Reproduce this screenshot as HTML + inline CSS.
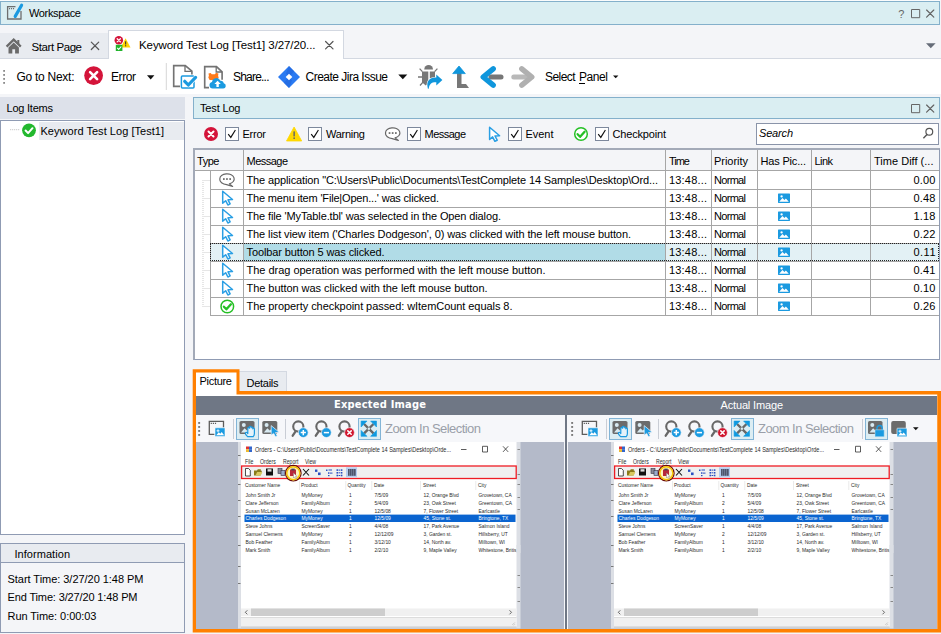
<!DOCTYPE html>
<html lang="en"><head><meta charset="utf-8"><title>Workspace - Keyword Test Log</title>
<style>
html,body{margin:0;padding:0;}
body{width:941px;height:634px;overflow:hidden;background:#f4f5f8;position:relative;font-family:"Liberation Sans",sans-serif;}
body>div,body>svg{position:absolute;box-sizing:content-box;}
.t{position:absolute;white-space:pre;line-height:16px;height:16px;}
</style></head>
<body>
<div style="left:0px;top:0px;width:940px;height:2px;background:#fbfcfd;"></div>
<div style="left:0px;top:1px;width:938px;height:22px;background:#daeef2;border:1px solid #84b0cb;"></div>
<span class="t" style="left:29.00px;top:4.79px;font-size:11px;letter-spacing:-0.354px;color:#000;">Workspace</span>
<span class="t" style="left:898.30px;top:5.79px;font-size:11px;letter-spacing:0.000px;color:#666;">?</span>
<div style="left:0px;top:33px;width:108px;height:25px;background:#e8ebf0;"></div>
<div style="left:0px;top:58px;width:941px;height:1px;background:#d3d8e1;"></div>
<div style="left:108px;top:30px;width:234px;height:29px;background:#fff;border:1px solid #d3d8e1;border-bottom:none;"></div>
<span class="t" style="left:31.50px;top:39.22px;font-size:11.5px;letter-spacing:-0.427px;color:#000;">Start Page</span>
<span class="t" style="left:139.00px;top:36.52px;font-size:11.5px;letter-spacing:-0.086px;color:#000;">Keyword Test Log [Test1] 3/27/20...</span>
<div style="left:0px;top:59px;width:941px;height:35px;background:#fff;"></div>
<span class="t" style="left:16.50px;top:69.04px;font-size:12px;letter-spacing:-0.270px;color:#000;">Go to Next:</span>
<span class="t" style="left:111.00px;top:69.04px;font-size:12px;letter-spacing:-0.418px;color:#000;">Error</span>
<span class="t" style="left:233.00px;top:69.04px;font-size:12px;letter-spacing:-0.790px;color:#000;">Share...</span>
<span class="t" style="left:305.50px;top:69.04px;font-size:12px;letter-spacing:-0.513px;color:#000;">Create Jira Issue</span>
<span class="t" style="left:545.00px;top:69.04px;font-size:12px;letter-spacing:-0.572px;color:#000;">Select</span>
<span class="t" style="left:579.00px;top:69.04px;font-size:12px;letter-spacing:-0.426px;color:#000;">Panel</span>
<div style="left:579px;top:82.5px;width:6.3px;height:1px;background:#000;"></div>
<div style="left:0px;top:97px;width:185px;height:21.6px;background:#dde1ea;"></div>
<span class="t" style="left:6.50px;top:99.99px;font-size:11px;letter-spacing:-0.227px;color:#000;">Log Items</span>
<div style="left:0px;top:120px;width:183px;height:413px;background:#fff;border:1px solid #8f9bb3;"></div>
<div style="left:39px;top:121.5px;width:145px;height:18px;background:#e8ebf0;"></div>
<span class="t" style="left:40.50px;top:122.69px;font-size:11px;letter-spacing:0.035px;color:#000;">Keyword Test Log [Test1]</span>
<div style="left:0px;top:543px;width:183px;height:88px;border:1px solid #8f9bb3;"></div>
<div style="left:1px;top:544px;width:183px;height:18px;background:#e8ebf0;border-bottom:1px solid #8f9bb3;"></div>
<span class="t" style="left:14.50px;top:546.19px;font-size:11px;letter-spacing:0.047px;color:#000;">Information</span>
<span class="t" style="left:7.50px;top:571.19px;font-size:11px;letter-spacing:-0.037px;color:#000;">Start Time: 3/27/20 1:48 PM</span>
<span class="t" style="left:7.50px;top:589.19px;font-size:11px;letter-spacing:-0.138px;color:#000;">End Time: 3/27/20 1:48 PM</span>
<span class="t" style="left:7.50px;top:608.49px;font-size:11px;letter-spacing:-0.056px;color:#000;">Run Time: 0:00:03</span>
<div style="left:193px;top:97px;width:745px;height:20px;background:#daeef2;border:1px solid #84b0cb;"></div>
<span class="t" style="left:200.00px;top:99.99px;font-size:11px;letter-spacing:-0.156px;color:#000;">Test Log</span>
<div style="left:225px;top:127px;width:12px;height:12px;background:#fff;border:1px solid #7d889c;"></div>
<div style="left:308px;top:127px;width:12px;height:12px;background:#fff;border:1px solid #7d889c;"></div>
<div style="left:407px;top:127px;width:12px;height:12px;background:#fff;border:1px solid #7d889c;"></div>
<div style="left:508px;top:127px;width:12px;height:12px;background:#fff;border:1px solid #7d889c;"></div>
<div style="left:595px;top:127px;width:12px;height:12px;background:#fff;border:1px solid #7d889c;"></div>
<span class="t" style="left:242.50px;top:125.99px;font-size:11px;letter-spacing:-0.238px;color:#000;">Error</span>
<span class="t" style="left:326.00px;top:125.99px;font-size:11px;letter-spacing:-0.260px;color:#000;">Warning</span>
<span class="t" style="left:424.50px;top:125.99px;font-size:11px;letter-spacing:-0.523px;color:#000;">Message</span>
<span class="t" style="left:525.50px;top:125.99px;font-size:11px;letter-spacing:-0.035px;color:#000;">Event</span>
<span class="t" style="left:612.50px;top:125.99px;font-size:11px;letter-spacing:-0.172px;color:#000;">Checkpoint</span>
<div style="left:756px;top:123px;width:181px;height:20px;background:#fff;border:1px solid #8a94a9;"></div>
<span class="t" style="left:759.00px;top:125.49px;font-size:11px;letter-spacing:-0.172px;color:#000;font-style:italic;">Search</span>
<div style="left:193px;top:148px;width:744px;height:208.6px;background:#fff;border:1px solid #8f9bb3;border-top:2px solid #a3aab8;border-left:2px solid #a3aab8;"></div>
<div style="left:195px;top:150px;width:744px;height:20.4px;background:#f4f5f8;border-bottom:1px solid #a6a6a6;"></div>
<div style="left:243px;top:150px;width:1px;height:166px;background:#a6a6a6;"></div>
<div style="left:665px;top:150px;width:1px;height:166px;background:#a6a6a6;"></div>
<div style="left:711px;top:150px;width:1px;height:166px;background:#a6a6a6;"></div>
<div style="left:757px;top:150px;width:1px;height:166px;background:#a6a6a6;"></div>
<div style="left:811px;top:150px;width:1px;height:166px;background:#a6a6a6;"></div>
<div style="left:870px;top:150px;width:1px;height:166px;background:#a6a6a6;"></div>
<div style="left:210px;top:171px;width:1px;height:145px;background:#a6a6a6;"></div>
<div style="left:210px;top:189px;width:729px;height:1px;background:#a6a6a6;"></div>
<div style="left:210px;top:207px;width:729px;height:1px;background:#a6a6a6;"></div>
<div style="left:210px;top:225px;width:729px;height:1px;background:#a6a6a6;"></div>
<div style="left:210px;top:243px;width:729px;height:1px;background:#a6a6a6;"></div>
<div style="left:210px;top:261px;width:729px;height:1px;background:#a6a6a6;"></div>
<div style="left:210px;top:279px;width:729px;height:1px;background:#a6a6a6;"></div>
<div style="left:210px;top:297px;width:729px;height:1px;background:#a6a6a6;"></div>
<div style="left:210px;top:315px;width:729px;height:1px;background:#a6a6a6;"></div>
<div style="left:244px;top:244px;width:421px;height:17px;background:#b1dce7;"></div>
<div style="left:211px;top:244px;width:32px;height:17px;background:#e3f1f5;"></div>
<div style="left:666px;top:244px;width:45px;height:17px;background:#e3f1f5;"></div>
<div style="left:712px;top:244px;width:45px;height:17px;background:#e3f1f5;"></div>
<div style="left:758px;top:244px;width:53px;height:17px;background:#e3f1f5;"></div>
<div style="left:812px;top:244px;width:58px;height:17px;background:#e3f1f5;"></div>
<div style="left:871px;top:244px;width:68px;height:17px;background:#e3f1f5;"></div>
<div style="left:210px;top:243px;width:729px;height:18px;border:1px dotted #222;box-sizing:border-box;"></div>
<span class="t" style="left:197.00px;top:152.99px;font-size:11px;letter-spacing:-0.453px;color:#000;">Type</span>
<span class="t" style="left:246.50px;top:152.99px;font-size:11px;letter-spacing:-0.523px;color:#000;">Message</span>
<span class="t" style="left:669.00px;top:152.99px;font-size:11px;letter-spacing:-1.016px;color:#000;">Time</span>
<span class="t" style="left:714.00px;top:152.99px;font-size:11px;letter-spacing:-0.033px;color:#000;">Priority</span>
<span class="t" style="left:760.50px;top:152.99px;font-size:11px;letter-spacing:-0.175px;color:#000;">Has Pic...</span>
<span class="t" style="left:814.50px;top:152.99px;font-size:11px;letter-spacing:-0.562px;color:#000;">Link</span>
<span class="t" style="left:874.00px;top:152.99px;font-size:11px;letter-spacing:0.017px;color:#000;">Time Diff (...</span>
<span class="t" style="left:246.50px;top:171.89px;font-size:11px;letter-spacing:-0.125px;color:#000;">The application "C:\Users\Public\Documents\TestComplete 14 Samples\Desktop\Ord...</span>
<span class="t" style="left:669.00px;top:171.89px;font-size:11px;letter-spacing:0.185px;color:#000;">13:48...</span>
<span class="t" style="left:714.00px;top:171.89px;font-size:11px;letter-spacing:-0.691px;color:#000;">Normal</span>
<span class="t" style="left:913.50px;top:171.89px;font-size:11px;letter-spacing:0.193px;color:#000;">0.00</span>
<span class="t" style="left:246.50px;top:189.89px;font-size:11px;letter-spacing:-0.179px;color:#000;">The menu item 'File|Open...' was clicked.</span>
<span class="t" style="left:669.00px;top:189.89px;font-size:11px;letter-spacing:0.185px;color:#000;">13:48...</span>
<span class="t" style="left:714.00px;top:189.89px;font-size:11px;letter-spacing:-0.691px;color:#000;">Normal</span>
<span class="t" style="left:913.50px;top:189.89px;font-size:11px;letter-spacing:0.193px;color:#000;">0.48</span>
<span class="t" style="left:246.50px;top:207.89px;font-size:11px;letter-spacing:-0.121px;color:#000;">The file 'MyTable.tbl' was selected in the Open dialog.</span>
<span class="t" style="left:669.00px;top:207.89px;font-size:11px;letter-spacing:0.185px;color:#000;">13:48...</span>
<span class="t" style="left:714.00px;top:207.89px;font-size:11px;letter-spacing:-0.691px;color:#000;">Normal</span>
<span class="t" style="left:913.50px;top:207.89px;font-size:11px;letter-spacing:0.193px;color:#000;">1.18</span>
<span class="t" style="left:246.50px;top:225.89px;font-size:11px;letter-spacing:-0.106px;color:#000;">The list view item ('Charles Dodgeson', 0) was clicked with the left mouse button.</span>
<span class="t" style="left:669.00px;top:225.89px;font-size:11px;letter-spacing:0.185px;color:#000;">13:48...</span>
<span class="t" style="left:714.00px;top:225.89px;font-size:11px;letter-spacing:-0.691px;color:#000;">Normal</span>
<span class="t" style="left:913.50px;top:225.89px;font-size:11px;letter-spacing:0.193px;color:#000;">0.22</span>
<span class="t" style="left:246.50px;top:243.89px;font-size:11px;letter-spacing:-0.116px;color:#000;">Toolbar button 5 was clicked.</span>
<span class="t" style="left:669.00px;top:243.89px;font-size:11px;letter-spacing:0.185px;color:#000;">13:48...</span>
<span class="t" style="left:714.00px;top:243.89px;font-size:11px;letter-spacing:-0.691px;color:#000;">Normal</span>
<span class="t" style="left:913.50px;top:243.89px;font-size:11px;letter-spacing:0.469px;color:#000;">0.11</span>
<span class="t" style="left:246.50px;top:261.89px;font-size:11px;letter-spacing:-0.021px;color:#000;">The drag operation was performed with the left mouse button.</span>
<span class="t" style="left:669.00px;top:261.89px;font-size:11px;letter-spacing:0.185px;color:#000;">13:48...</span>
<span class="t" style="left:714.00px;top:261.89px;font-size:11px;letter-spacing:-0.691px;color:#000;">Normal</span>
<span class="t" style="left:913.50px;top:261.89px;font-size:11px;letter-spacing:0.193px;color:#000;">0.41</span>
<span class="t" style="left:246.50px;top:279.89px;font-size:11px;letter-spacing:-0.048px;color:#000;">The button was clicked with the left mouse button.</span>
<span class="t" style="left:669.00px;top:279.89px;font-size:11px;letter-spacing:0.185px;color:#000;">13:48...</span>
<span class="t" style="left:714.00px;top:279.89px;font-size:11px;letter-spacing:-0.691px;color:#000;">Normal</span>
<span class="t" style="left:913.50px;top:279.89px;font-size:11px;letter-spacing:0.193px;color:#000;">0.10</span>
<span class="t" style="left:246.50px;top:297.89px;font-size:11px;letter-spacing:-0.060px;color:#000;">The property checkpoint passed: wItemCount equals 8.</span>
<span class="t" style="left:669.00px;top:297.89px;font-size:11px;letter-spacing:0.185px;color:#000;">13:48...</span>
<span class="t" style="left:714.00px;top:297.89px;font-size:11px;letter-spacing:-0.691px;color:#000;">Normal</span>
<span class="t" style="left:913.50px;top:297.89px;font-size:11px;letter-spacing:0.193px;color:#000;">0.26</span>
<div style="left:239px;top:371.3px;width:47px;height:20px;background:#e8ebf0;border:1px solid #d3d8e1;border-left:none;border-bottom:none;"></div>
<div style="left:195px;top:371px;width:42px;height:24px;background:#fff;"></div>
<div style="left:195px;top:393px;width:743px;height:237px;background:#fff;"></div>
<svg style="left:190px;top:366px" width="751" height="268" viewBox="190 366 751 268"><path fill-rule="evenodd" fill="#ff8000" d="M192.7 369.3H239.5V391.1H941V632.5H192.7ZM196 372.4V629H937.25V394.4H236.5V372.4Z"/></svg>
<span class="t" style="left:199.50px;top:372.99px;font-size:11px;letter-spacing:-0.292px;color:#000;">Picture</span>
<span class="t" style="left:246.50px;top:374.79px;font-size:11px;letter-spacing:-0.271px;color:#000;">Details</span>
<div style="left:196px;top:395.5px;width:741px;height:19px;background:#6f7785;"></div>
<span class="t" style="left:334.00px;top:396.79px;font-size:11px;letter-spacing:0.212px;color:#fff;font-family:'DejaVu Sans Condensed', 'DejaVu Sans', 'Liberation Sans', sans-serif;font-weight:bold;">Expected Image</span>
<span class="t" style="left:720.50px;top:397.39px;font-size:11px;letter-spacing:-0.155px;color:#fff;">Actual Image</span>
<div style="left:196px;top:414.5px;width:368.5px;height:27px;background:#f6f7fa;"></div>
<div style="left:567.5px;top:414.5px;width:369.5px;height:27px;background:#f6f7fa;"></div>
<div style="left:196px;top:441.5px;width:368px;height:187.5px;background:#b4bac9;"></div>
<div style="left:568px;top:441.5px;width:369px;height:187.5px;background:#b4bac9;"></div>
<div style="left:564px;top:414.5px;width:4px;height:214.5px;background:#f6f7fa;"></div>
<div style="left:565.2px;top:414.5px;width:1.6px;height:214.5px;background:#6f7785;"></div>
<span class="t" style="left:385.00px;top:420.80px;font-size:13px;letter-spacing:-0.549px;color:#9a9fa9;">Zoom In Selection</span>
<span class="t" style="left:758.00px;top:420.80px;font-size:13px;letter-spacing:-0.549px;color:#9a9fa9;">Zoom In Selection</span>
<div style="left:236.3px;top:418px;width:22.6px;height:21.7px;background:#dcedf3;border:1px solid #82b4d6;box-sizing:border-box;"></div>
<div style="left:358.2px;top:418px;width:22.6px;height:21.7px;background:#dcedf3;border:1px solid #82b4d6;box-sizing:border-box;"></div>
<div style="left:609.3px;top:418px;width:22.6px;height:21.7px;background:#dcedf3;border:1px solid #82b4d6;box-sizing:border-box;"></div>
<div style="left:731.2px;top:418px;width:22.6px;height:21.7px;background:#dcedf3;border:1px solid #82b4d6;box-sizing:border-box;"></div>
<div style="left:865.2px;top:418px;width:22.6px;height:21.7px;background:#dcedf3;border:1px solid #82b4d6;box-sizing:border-box;"></div>
<div style="left:232.5px;top:419px;width:1px;height:20px;background:#c9cdd5;"></div>
<div style="left:285px;top:419px;width:1px;height:20px;background:#c9cdd5;"></div>
<div style="left:605.5px;top:419px;width:1px;height:20px;background:#c9cdd5;"></div>
<div style="left:658px;top:419px;width:1px;height:20px;background:#c9cdd5;"></div>
<div style="left:861.5px;top:419px;width:1px;height:20px;background:#c9cdd5;"></div>
<svg style="left:0px;top:0px" width="941" height="59" viewBox="0 0 941 59">
<path d="M15.5 6.6H7.6V19h13.4V11" fill="none" stroke="#6e6e6e" stroke-width="1.3"/><path d="M9 8.6h1.1M11 8.6h1.1M13 8.6h1.1" stroke="#6e6e6e" stroke-width="1.1"/><path d="M15.2 16.4L21.6 5.2" stroke="#1b9ae0" stroke-width="3.2" stroke-linecap="round"/><path d="M14.3 17.9l.4-2.3 1.6 1z" fill="#1b9ae0"/>
<path d="M911.5 9.5h8.2v8.2h-8.2z" fill="none" stroke="#666" stroke-width="1"/><path d="M926.6 10.0L933.8000000000001 17.2M933.8000000000001 10.0L926.6 17.2" stroke="#606060" stroke-width="1.15" stroke-linecap="round" fill="none"/>
<path d="M6.6 46.6l7.1-6.9 7.1 6.9" fill="none" stroke="#6a6a6a" stroke-width="2.3" stroke-linejoin="miter"/><rect x="17.3" y="40" width="2" height="4" fill="#6a6a6a"/><path d="M8.5 47.6l5.2-5 5.2 5V53.4h-3.8v-4.1h-2.8v4.1H8.5z" fill="#6a6a6a"/>
<path d="M91.3 42.099999999999994L98.7 49.5M98.7 42.099999999999994L91.3 49.5" stroke="#555" stroke-width="1.2" stroke-linecap="round" fill="none"/><path d="M325.6 41.5L333.0 48.900000000000006M333.0 41.5L325.6 48.900000000000006" stroke="#555" stroke-width="1.2" stroke-linecap="round" fill="none"/>
<circle cx="118.8" cy="40.3" r="4.25" fill="#d4143a"/><path d="M117.2 38.699999999999996L120.39999999999999 41.9M120.39999999999999 38.699999999999996L117.2 41.9" stroke="#fff" stroke-width="1.3" stroke-linecap="round" fill="none"/><path d="M125.6 38.2l4.9 9.3h-9.8z" fill="#ffd400"/><rect x="125.1" y="41.3" width="1.1" height="3.2" fill="#333"/><rect x="125.1" y="45.2" width="1.1" height="1.1" fill="#333"/><rect x="115.8" y="44.8" width="6.6" height="6.2" fill="#21b32b"/><path d="M117.2 47.9l1.5 1.5 2.6-2.9" fill="none" stroke="#fff" stroke-width="1.1"/>
<path d="M926 43.3h9.6l-4.8 5z" fill="#666c78"/>
</svg>
<svg style="left:0px;top:59px" width="941" height="35" viewBox="0 59 941 35">
<rect x="3.2" y="70" width="1.8" height="1.8" fill="#8a8a8a"/><rect x="3.2" y="74" width="1.8" height="1.8" fill="#8a8a8a"/><rect x="3.2" y="78" width="1.8" height="1.8" fill="#8a8a8a"/><rect x="3.2" y="82" width="1.8" height="1.8" fill="#8a8a8a"/>
<circle cx="93.6" cy="75.6" r="9.4" fill="#d4143a"/><path d="M90.1 72.1L97.1 79.1M97.1 72.1L90.1 79.1" stroke="#fff" stroke-width="2.6" stroke-linecap="round" fill="none"/>
<path d="M147 75.2h7.4l-3.7 4.2z" fill="#111"/>
<rect x="165.8" y="63" width="1" height="27" fill="#d6d6d6"/>
<path d="M180 86.4h-6.3V65.6h11.6l6.6 5.6v3.2" fill="none" stroke="#737373" stroke-width="1.65"/><path d="M185 65.8v5.6h6.6" fill="none" stroke="#6e6e6e" stroke-width="1.3"/><rect x="181.4" y="76" width="12.6" height="12" rx="1" fill="#fff" stroke="#1b9ae0" stroke-width="1.5"/><path d="M184.7 81.3l3.6 3.7 7.3-7.6" fill="none" stroke="#fff" stroke-width="4.4" stroke-linecap="round" stroke-linejoin="round"/><path d="M184.7 81.3l3.6 3.7 7.3-7.6" fill="none" stroke="#1b9ae0" stroke-width="3.2" stroke-linecap="round" stroke-linejoin="round"/>
<path d="M209 87.6h-4.3V66.6h11.8l5.6 5.2v8" fill="none" stroke="#737373" stroke-width="1.65"/><path d="M216.2 66.8v5.2h5.8" fill="none" stroke="#6e6e6e" stroke-width="1.3"/><path d="M208.5 73.6l2.2-.6 1 1.3h3.2l1.1-1.5 2.4.8-.3 2.4 .6 1.6-1.5 2.4h-7.6l-1.3-2.4.6-1.8z" fill="#ff7a1a"/><path d="M212.6 88.6a3.3 3.3 0 0 1-.6-6.5 4.4 4.4 0 0 1 8.4-1.4 3 3 0 0 1 3.4 2.6 2.7 2.7 0 0 1-.6 5.3z" fill="#1b9ae0"/><path d="M217.6 80.8l3.2 3.3h-2v3h-2.4v-3h-2z" fill="#fff"/>
<path d="M289 66l11 11-11 11-11-11z" fill="#2a7af2"/><path d="M289 66l5.2 5.2-5.2 5.8-3-3.4z" fill="#1f63d8" opacity=".55"/><path d="M289 88l-5.2-5.2 5.2-5.8 3 3.4z" fill="#1f63d8" opacity=".55"/><path d="M289 73.7l3.3 3.3-3.3 3.3-3.3-3.3z" fill="#fff"/>
<path d="M398.3 74.6h9l-4.5 4.6z" fill="#111"/>
<path d="M424.2 69.4a4.4 4.4 0 0 1 8.8 0z" fill="#777"/><path d="M422 71.4h6.3v12l-2.6 2.2-3.7-3.4zM429.8 71.4H435v7h-5.2z" fill="#777"/><path d="M419.6 68.6l2.8 3M437.4 68.6l-2.8 3M418 77h4M420 85.5l3.2-3.6" stroke="#777" stroke-width="1.3" fill="none"/><path d="M427.9 88.7C426 81.4 429 77.4 436.3 77.6V74.6L442.4 80 436.3 85.4V82.2C431.6 82 429.3 83.9 428.7 88.7Z" fill="#0f96dc" stroke="#fff" stroke-width="1.3" paint-order="stroke"/>
<path d="M457 73v15h12l-3-4h-4.5V73z" fill="#777"/><path d="M459 66l6.3 7.6h-12.6z" fill="#0f96dc" stroke="#0f96dc" stroke-width=".8" stroke-linejoin="round"/>
<path d="M491 77h10" stroke="#777" stroke-width="5" stroke-linecap="round"/><path d="M493.2 68.8L483.2 77l10 8.2" fill="none" stroke="#0f96dc" stroke-width="5.4" stroke-linecap="round" stroke-linejoin="round"/>
<path d="M513.8 77h12" stroke="#b9b9b9" stroke-width="5" stroke-linecap="round"/><path d="M521.8 68.8l10 8.2-10 8.2" fill="none" stroke="#b0b0b0" stroke-width="5.4" stroke-linecap="round" stroke-linejoin="round"/>
<path d="M613 75.4h5.4l-2.7 2.9z" fill="#111"/>
</svg>
<svg style="left:0px;top:97px" width="941" height="52" viewBox="0 97 941 52">
<rect x="10.2" y="129.2" width="1" height="1" fill="#bdbdbd"/><rect x="12.2" y="129.2" width="1" height="1" fill="#bdbdbd"/><rect x="14.2" y="129.2" width="1" height="1" fill="#bdbdbd"/><rect x="16.2" y="129.2" width="1" height="1" fill="#bdbdbd"/><rect x="18.2" y="129.2" width="1" height="1" fill="#bdbdbd"/>
<circle cx="29" cy="130.3" r="6.9" fill="#23b82e"/><path d="M25.6 130.5l2.5 2.6 4.4-4.9" fill="none" stroke="#fff" stroke-width="2" stroke-linecap="round" stroke-linejoin="round"/>
<path d="M911.5 104.5h8.2v8.2h-8.2z" fill="none" stroke="#666" stroke-width="1"/><path d="M926.6 105.0L933.8000000000001 112.19999999999999M933.8000000000001 105.0L926.6 112.19999999999999" stroke="#606060" stroke-width="1.15" stroke-linecap="round" fill="none"/>
<circle cx="211" cy="134" r="7" fill="#d4143a"/><path d="M208.5 131.5L213.5 136.5M213.5 131.5L208.5 136.5" stroke="#fff" stroke-width="2" stroke-linecap="round" fill="none"/>
<path d="M294.1 127l7.6 14h-15.2z" fill="#ffd800" stroke="#ffd800" stroke-width=".8" stroke-linejoin="round"/><rect x="293.4" y="131.4" width="1.5" height="5" fill="#666"/><rect x="293.4" y="137.4" width="1.5" height="1.6" fill="#666"/>
<path d="M385.5 133a7.2 5.2 0 1 1 9.6 4.9l3.2 2.6-6-1.9a7.2 5.2 0 0 1-6.8-5.6z" fill="#fff" stroke="#666" stroke-width="1.2" stroke-linejoin="round"/><g fill="#666"><rect x="388.7" y="132.2" width="1.7" height="1.7"/><rect x="391.8" y="132.2" width="1.7" height="1.7"/><rect x="395.0" y="132.2" width="1.7" height="1.7"/></g>
<path d="M489.60 127.30 L489.60 139.50 L492.60 136.90 L494.90 141.30 L497.20 140.20 L495.00 136.00 L499.60 135.70Z" fill="#fff" stroke="#2a9fe4" stroke-width="1.5" stroke-linejoin="round"/>
<circle cx="581" cy="134" r="6.3" fill="#fff" stroke="#25c025" stroke-width="1.5"/><path d="M577.6 134.2l2.5 2.6 4.5-5" fill="none" stroke="#25c025" stroke-width="2.3" stroke-linecap="round" stroke-linejoin="round"/>
<path d="M228.2 134.2l2.6 3.2 4.6-7.4" fill="none" stroke="#111" stroke-width="1.15"/>
<path d="M311.2 134.2l2.6 3.2 4.6-7.4" fill="none" stroke="#111" stroke-width="1.15"/>
<path d="M410.2 134.2l2.6 3.2 4.6-7.4" fill="none" stroke="#111" stroke-width="1.15"/>
<path d="M511.2 134.2l2.6 3.2 4.6-7.4" fill="none" stroke="#111" stroke-width="1.15"/>
<path d="M598.2 134.2l2.6 3.2 4.6-7.4" fill="none" stroke="#111" stroke-width="1.15"/>
<circle cx="929.3" cy="131.8" r="3.4" fill="none" stroke="#555" stroke-width="1.2"/><path d="M927 134.4l-3.6 3.8" stroke="#555" stroke-width="1.4"/>
</svg>
<svg style="left:0px;top:171px" width="941" height="146" viewBox="0 171 941 146">
<rect x="202.5" y="180" width="1" height="1" fill="#cdcdcd"/><rect x="202.5" y="182" width="1" height="1" fill="#cdcdcd"/><rect x="202.5" y="184" width="1" height="1" fill="#cdcdcd"/><rect x="202.5" y="186" width="1" height="1" fill="#cdcdcd"/><rect x="202.5" y="188" width="1" height="1" fill="#cdcdcd"/><rect x="202.5" y="190" width="1" height="1" fill="#cdcdcd"/><rect x="202.5" y="192" width="1" height="1" fill="#cdcdcd"/><rect x="202.5" y="194" width="1" height="1" fill="#cdcdcd"/><rect x="202.5" y="196" width="1" height="1" fill="#cdcdcd"/><rect x="202.5" y="198" width="1" height="1" fill="#cdcdcd"/><rect x="202.5" y="200" width="1" height="1" fill="#cdcdcd"/><rect x="202.5" y="202" width="1" height="1" fill="#cdcdcd"/><rect x="202.5" y="204" width="1" height="1" fill="#cdcdcd"/><rect x="202.5" y="206" width="1" height="1" fill="#cdcdcd"/><rect x="202.5" y="208" width="1" height="1" fill="#cdcdcd"/><rect x="202.5" y="210" width="1" height="1" fill="#cdcdcd"/><rect x="202.5" y="212" width="1" height="1" fill="#cdcdcd"/><rect x="202.5" y="214" width="1" height="1" fill="#cdcdcd"/><rect x="202.5" y="216" width="1" height="1" fill="#cdcdcd"/><rect x="202.5" y="218" width="1" height="1" fill="#cdcdcd"/><rect x="202.5" y="220" width="1" height="1" fill="#cdcdcd"/><rect x="202.5" y="222" width="1" height="1" fill="#cdcdcd"/><rect x="202.5" y="224" width="1" height="1" fill="#cdcdcd"/><rect x="202.5" y="226" width="1" height="1" fill="#cdcdcd"/><rect x="202.5" y="228" width="1" height="1" fill="#cdcdcd"/><rect x="202.5" y="230" width="1" height="1" fill="#cdcdcd"/><rect x="202.5" y="232" width="1" height="1" fill="#cdcdcd"/><rect x="202.5" y="234" width="1" height="1" fill="#cdcdcd"/><rect x="202.5" y="236" width="1" height="1" fill="#cdcdcd"/><rect x="202.5" y="238" width="1" height="1" fill="#cdcdcd"/><rect x="202.5" y="240" width="1" height="1" fill="#cdcdcd"/><rect x="202.5" y="242" width="1" height="1" fill="#cdcdcd"/><rect x="202.5" y="244" width="1" height="1" fill="#cdcdcd"/><rect x="202.5" y="246" width="1" height="1" fill="#cdcdcd"/><rect x="202.5" y="248" width="1" height="1" fill="#cdcdcd"/><rect x="202.5" y="250" width="1" height="1" fill="#cdcdcd"/><rect x="202.5" y="252" width="1" height="1" fill="#cdcdcd"/><rect x="202.5" y="254" width="1" height="1" fill="#cdcdcd"/><rect x="202.5" y="256" width="1" height="1" fill="#cdcdcd"/><rect x="202.5" y="258" width="1" height="1" fill="#cdcdcd"/><rect x="202.5" y="260" width="1" height="1" fill="#cdcdcd"/><rect x="202.5" y="262" width="1" height="1" fill="#cdcdcd"/><rect x="202.5" y="264" width="1" height="1" fill="#cdcdcd"/><rect x="202.5" y="266" width="1" height="1" fill="#cdcdcd"/><rect x="202.5" y="268" width="1" height="1" fill="#cdcdcd"/><rect x="202.5" y="270" width="1" height="1" fill="#cdcdcd"/><rect x="202.5" y="272" width="1" height="1" fill="#cdcdcd"/><rect x="202.5" y="274" width="1" height="1" fill="#cdcdcd"/><rect x="202.5" y="276" width="1" height="1" fill="#cdcdcd"/><rect x="202.5" y="278" width="1" height="1" fill="#cdcdcd"/><rect x="202.5" y="280" width="1" height="1" fill="#cdcdcd"/><rect x="202.5" y="282" width="1" height="1" fill="#cdcdcd"/><rect x="202.5" y="284" width="1" height="1" fill="#cdcdcd"/><rect x="202.5" y="286" width="1" height="1" fill="#cdcdcd"/><rect x="202.5" y="288" width="1" height="1" fill="#cdcdcd"/><rect x="202.5" y="290" width="1" height="1" fill="#cdcdcd"/><rect x="202.5" y="292" width="1" height="1" fill="#cdcdcd"/><rect x="202.5" y="294" width="1" height="1" fill="#cdcdcd"/><rect x="202.5" y="296" width="1" height="1" fill="#cdcdcd"/><rect x="202.5" y="298" width="1" height="1" fill="#cdcdcd"/><rect x="202.5" y="300" width="1" height="1" fill="#cdcdcd"/><rect x="202.5" y="302" width="1" height="1" fill="#cdcdcd"/><rect x="202.5" y="304" width="1" height="1" fill="#cdcdcd"/><rect x="202.5" y="306" width="1" height="1" fill="#cdcdcd"/>
<rect x="204.5" y="180.0" width="1" height="1" fill="#cdcdcd"/><rect x="206.5" y="180.0" width="1" height="1" fill="#cdcdcd"/><rect x="208.5" y="180.0" width="1" height="1" fill="#cdcdcd"/>
<rect x="204.5" y="198.0" width="1" height="1" fill="#cdcdcd"/><rect x="206.5" y="198.0" width="1" height="1" fill="#cdcdcd"/><rect x="208.5" y="198.0" width="1" height="1" fill="#cdcdcd"/>
<rect x="204.5" y="216.0" width="1" height="1" fill="#cdcdcd"/><rect x="206.5" y="216.0" width="1" height="1" fill="#cdcdcd"/><rect x="208.5" y="216.0" width="1" height="1" fill="#cdcdcd"/>
<rect x="204.5" y="234.0" width="1" height="1" fill="#cdcdcd"/><rect x="206.5" y="234.0" width="1" height="1" fill="#cdcdcd"/><rect x="208.5" y="234.0" width="1" height="1" fill="#cdcdcd"/>
<rect x="204.5" y="252.0" width="1" height="1" fill="#cdcdcd"/><rect x="206.5" y="252.0" width="1" height="1" fill="#cdcdcd"/><rect x="208.5" y="252.0" width="1" height="1" fill="#cdcdcd"/>
<rect x="204.5" y="270.0" width="1" height="1" fill="#cdcdcd"/><rect x="206.5" y="270.0" width="1" height="1" fill="#cdcdcd"/><rect x="208.5" y="270.0" width="1" height="1" fill="#cdcdcd"/>
<rect x="204.5" y="288.0" width="1" height="1" fill="#cdcdcd"/><rect x="206.5" y="288.0" width="1" height="1" fill="#cdcdcd"/><rect x="208.5" y="288.0" width="1" height="1" fill="#cdcdcd"/>
<rect x="204.5" y="306.0" width="1" height="1" fill="#cdcdcd"/><rect x="206.5" y="306.0" width="1" height="1" fill="#cdcdcd"/><rect x="208.5" y="306.0" width="1" height="1" fill="#cdcdcd"/>
<path d="M219.8 179a7.2 5.2 0 1 1 9.6 4.9l3.2 2.6-6-1.9a7.2 5.2 0 0 1-6.8-5.6z" fill="#fff" stroke="#666" stroke-width="1.2" stroke-linejoin="round"/><g fill="#666"><rect x="223" y="178.2" width="1.7" height="1.7"/><rect x="226.1" y="178.2" width="1.7" height="1.7"/><rect x="229.3" y="178.2" width="1.7" height="1.7"/></g>
<path d="M222.70 191.30 L222.70 203.26 L225.64 200.71 L227.89 205.02 L230.15 203.94 L227.99 199.83 L232.50 199.53Z" fill="#fff" stroke="#2a9fe4" stroke-width="1.5" stroke-linejoin="round"/>
<path d="M222.70 209.30 L222.70 221.26 L225.64 218.71 L227.89 223.02 L230.15 221.94 L227.99 217.83 L232.50 217.53Z" fill="#fff" stroke="#2a9fe4" stroke-width="1.5" stroke-linejoin="round"/>
<path d="M222.70 227.30 L222.70 239.26 L225.64 236.71 L227.89 241.02 L230.15 239.94 L227.99 235.83 L232.50 235.53Z" fill="#fff" stroke="#2a9fe4" stroke-width="1.5" stroke-linejoin="round"/>
<path d="M222.70 245.30 L222.70 257.26 L225.64 254.71 L227.89 259.02 L230.15 257.94 L227.99 253.83 L232.50 253.53Z" fill="#fff" stroke="#2a9fe4" stroke-width="1.5" stroke-linejoin="round"/>
<path d="M222.70 263.30 L222.70 275.26 L225.64 272.71 L227.89 277.02 L230.15 275.94 L227.99 271.83 L232.50 271.53Z" fill="#fff" stroke="#2a9fe4" stroke-width="1.5" stroke-linejoin="round"/>
<path d="M222.70 281.30 L222.70 293.26 L225.64 290.71 L227.89 295.02 L230.15 293.94 L227.99 289.83 L232.50 289.53Z" fill="#fff" stroke="#2a9fe4" stroke-width="1.5" stroke-linejoin="round"/>
<circle cx="227.3" cy="306.5" r="6.3" fill="#fff" stroke="#25c025" stroke-width="1.5"/><path d="M223.9 306.7l2.5 2.6 4.5-5" fill="none" stroke="#25c025" stroke-width="2.3" stroke-linecap="round" stroke-linejoin="round"/>
<rect x="778" y="193.5" width="12" height="9.4" rx=".6" fill="#1b9ae0"/><path d="M779.2 201.7l3.3-3.6 1.9 1.9 1.5-1.4 2.9 3.1z" fill="#fff"/><circle cx="781.6" cy="196.4" r="1.15" fill="#fff"/>
<rect x="778" y="211.5" width="12" height="9.4" rx=".6" fill="#1b9ae0"/><path d="M779.2 219.7l3.3-3.6 1.9 1.9 1.5-1.4 2.9 3.1z" fill="#fff"/><circle cx="781.6" cy="214.4" r="1.15" fill="#fff"/>
<rect x="778" y="229.5" width="12" height="9.4" rx=".6" fill="#1b9ae0"/><path d="M779.2 237.7l3.3-3.6 1.9 1.9 1.5-1.4 2.9 3.1z" fill="#fff"/><circle cx="781.6" cy="232.4" r="1.15" fill="#fff"/>
<rect x="778" y="247.5" width="12" height="9.4" rx=".6" fill="#1b9ae0"/><path d="M779.2 255.7l3.3-3.6 1.9 1.9 1.5-1.4 2.9 3.1z" fill="#fff"/><circle cx="781.6" cy="250.4" r="1.15" fill="#fff"/>
<rect x="778" y="265.5" width="12" height="9.4" rx=".6" fill="#1b9ae0"/><path d="M779.2 273.7l3.3-3.6 1.9 1.9 1.5-1.4 2.9 3.1z" fill="#fff"/><circle cx="781.6" cy="268.4" r="1.15" fill="#fff"/>
<rect x="778" y="283.5" width="12" height="9.4" rx=".6" fill="#1b9ae0"/><path d="M779.2 291.7l3.3-3.6 1.9 1.9 1.5-1.4 2.9 3.1z" fill="#fff"/><circle cx="781.6" cy="286.4" r="1.15" fill="#fff"/>
<rect x="778" y="301.5" width="12" height="9.4" rx=".6" fill="#1b9ae0"/><path d="M779.2 309.7l3.3-3.6 1.9 1.9 1.5-1.4 2.9 3.1z" fill="#fff"/><circle cx="781.6" cy="304.4" r="1.15" fill="#fff"/>
</svg>
<svg style="left:0px;top:414px" width="941" height="28" viewBox="0 414 941 28">
<rect x="198.2" y="422" width="1.9" height="1.9" fill="#7a7a7a"/><rect x="198.2" y="426" width="1.9" height="1.9" fill="#7a7a7a"/><rect x="198.2" y="430" width="1.9" height="1.9" fill="#7a7a7a"/><rect x="198.2" y="434" width="1.9" height="1.9" fill="#7a7a7a"/>
<path d="M214.5 434.4h-5.2V421.4h14.2v6" fill="none" stroke="#5c5c5c" stroke-width="1.3"/><path d="M210.7 423.4h1.2M212.8 423.4h1.2M214.9 423.4h1.2" stroke="#5c5c5c" stroke-width="1.3"/><rect x="215" y="427.8" width="10" height="8.6" rx=".6" fill="#1b9ae0" stroke="#fff" stroke-width=".6"/><path d="M216.2 435.20000000000005l2.6-3 1.5 1.5 1.4-1.6 2.4 3.1z" fill="#fff"/><path d="M218 429.3v3M216.5 430.8h3" stroke="#fff" stroke-width=".9"/>
<rect x="239.5" y="421" width="15" height="13" rx="1.6" fill="#6b6b6b"/><circle cx="243.8" cy="424.9" r="2" fill="#d7e9f1"/><path d="M241.0 432.5l3.6-4.2 2.4 2.3 1-1 3 2.9z" fill="#d7e9f1"/>
<path d="M247.6 436.6c-1.6-1.6-2.6-3.4-2-4 .7-.6 1.6.2 2.2 1v-5.4c0-1.2 1.5-1.2 1.6 0v-1c.1-1.2 1.6-1.2 1.7 0v.6c.1-1.1 1.6-1.1 1.7 0v1c.2-1 1.5-.9 1.6.1v4.7c0 1.6-.6 2.4-1.2 3z" fill="#e4f2f9" stroke="#1b9ae0" stroke-width="1.2" stroke-linejoin="round"/>
<rect x="262.3" y="421" width="15" height="13" rx="1.6" fill="#6b6b6b"/><circle cx="266.6" cy="424.9" r="2" fill="#d7e9f1"/><path d="M263.8 432.5l3.6-4.2 2.4 2.3 1-1 3 2.9z" fill="#d7e9f1"/>
<path d="M271.20 425.60 L271.20 435.36 L273.60 433.28 L275.44 436.80 L277.28 435.92 L275.52 432.56 L279.20 432.32Z" fill="#1b9ae0" stroke="#f6f7fa" stroke-width="0.7" stroke-linejoin="round"/>
<circle cx="298.3" cy="426.5" r="5.1" fill="none" stroke="#686868" stroke-width="2.1"/><path d="M295.6 431.3l-2.9 4.4" stroke="#686868" stroke-width="2.3" stroke-linecap="round"/><circle cx="303.3" cy="432.6" r="4.9" fill="#1b9ae0" stroke="#f6f7fa" stroke-width=".7"/><path d="M300.7 432.6h5.2M303.3 430.0v5.2" stroke="#fff" stroke-width="1.5"/>
<circle cx="321.4" cy="426.5" r="5.1" fill="none" stroke="#686868" stroke-width="2.1"/><path d="M318.7 431.3l-2.9 4.4" stroke="#686868" stroke-width="2.3" stroke-linecap="round"/><circle cx="326.4" cy="432.6" r="4.9" fill="#1b9ae0" stroke="#f6f7fa" stroke-width=".7"/><path d="M323.79999999999995 432.6h5.2" stroke="#fff" stroke-width="1.5"/>
<circle cx="344.5" cy="426.5" r="5.1" fill="none" stroke="#686868" stroke-width="2.1"/><path d="M341.8 431.3l-2.9 4.4" stroke="#686868" stroke-width="2.3" stroke-linecap="round"/><circle cx="349.5" cy="432.6" r="4.9" fill="#d0142c" stroke="#f6f7fa" stroke-width=".7"/><path d="M347.8 430.90000000000003L351.2 434.3M351.2 430.90000000000003L347.8 434.3" stroke="#fff" stroke-width="1.5" stroke-linecap="round" fill="none"/>
<path d="M364.1 424.0l9.4 9.4M373.5 424.0l-9.4 9.4" stroke="#686868" stroke-width="2.4"/><rect x="367.7" y="427.59999999999997" width="2.2" height="2.2" fill="#dff0f5"/><path d="M361.1 421.09999999999997h5.9l-5.9 5.9z" fill="#0f9ae0" stroke="#0f9ae0" stroke-width=".6" stroke-linejoin="round"/><path d="M361.1 436.3h5.9l-5.9 -5.9z" fill="#0f9ae0" stroke="#0f9ae0" stroke-width=".6" stroke-linejoin="round"/><path d="M376.5 421.09999999999997h-5.9l5.9 5.9z" fill="#0f9ae0" stroke="#0f9ae0" stroke-width=".6" stroke-linejoin="round"/><path d="M376.5 436.3h-5.9l5.9 -5.9z" fill="#0f9ae0" stroke="#0f9ae0" stroke-width=".6" stroke-linejoin="round"/>
<rect x="571.2" y="422" width="1.9" height="1.9" fill="#7a7a7a"/><rect x="571.2" y="426" width="1.9" height="1.9" fill="#7a7a7a"/><rect x="571.2" y="430" width="1.9" height="1.9" fill="#7a7a7a"/><rect x="571.2" y="434" width="1.9" height="1.9" fill="#7a7a7a"/>
<path d="M587.5 434.4h-5.2V421.4h14.2v6" fill="none" stroke="#5c5c5c" stroke-width="1.3"/><path d="M583.7 423.4h1.2M585.8 423.4h1.2M587.9 423.4h1.2" stroke="#5c5c5c" stroke-width="1.3"/><rect x="588" y="427.8" width="10" height="8.6" rx=".6" fill="#1b9ae0" stroke="#fff" stroke-width=".6"/><path d="M589.2 435.20000000000005l2.6-3 1.5 1.5 1.4-1.6 2.4 3.1z" fill="#fff"/><path d="M591 429.3v3M589.5 430.8h3" stroke="#fff" stroke-width=".9"/>
<rect x="612.5" y="421" width="15" height="13" rx="1.6" fill="#6b6b6b"/><circle cx="616.8" cy="424.9" r="2" fill="#d7e9f1"/><path d="M614.0 432.5l3.6-4.2 2.4 2.3 1-1 3 2.9z" fill="#d7e9f1"/>
<path d="M620.6 436.6c-1.6-1.6-2.6-3.4-2-4 .7-.6 1.6.2 2.2 1v-5.4c0-1.2 1.5-1.2 1.6 0v-1c.1-1.2 1.6-1.2 1.7 0v.6c.1-1.1 1.6-1.1 1.7 0v1c.2-1 1.5-.9 1.6.1v4.7c0 1.6-.6 2.4-1.2 3z" fill="#e4f2f9" stroke="#1b9ae0" stroke-width="1.2" stroke-linejoin="round"/>
<rect x="635.3" y="421" width="15" height="13" rx="1.6" fill="#6b6b6b"/><circle cx="639.5999999999999" cy="424.9" r="2" fill="#d7e9f1"/><path d="M636.8 432.5l3.6-4.2 2.4 2.3 1-1 3 2.9z" fill="#d7e9f1"/>
<path d="M644.20 425.60 L644.20 435.36 L646.60 433.28 L648.44 436.80 L650.28 435.92 L648.52 432.56 L652.20 432.32Z" fill="#1b9ae0" stroke="#f6f7fa" stroke-width="0.7" stroke-linejoin="round"/>
<circle cx="671.3" cy="426.5" r="5.1" fill="none" stroke="#686868" stroke-width="2.1"/><path d="M668.5999999999999 431.3l-2.9 4.4" stroke="#686868" stroke-width="2.3" stroke-linecap="round"/><circle cx="676.3" cy="432.6" r="4.9" fill="#1b9ae0" stroke="#f6f7fa" stroke-width=".7"/><path d="M673.6999999999999 432.6h5.2M676.3 430.0v5.2" stroke="#fff" stroke-width="1.5"/>
<circle cx="694.4" cy="426.5" r="5.1" fill="none" stroke="#686868" stroke-width="2.1"/><path d="M691.6999999999999 431.3l-2.9 4.4" stroke="#686868" stroke-width="2.3" stroke-linecap="round"/><circle cx="699.4" cy="432.6" r="4.9" fill="#1b9ae0" stroke="#f6f7fa" stroke-width=".7"/><path d="M696.8 432.6h5.2" stroke="#fff" stroke-width="1.5"/>
<circle cx="717.5" cy="426.5" r="5.1" fill="none" stroke="#686868" stroke-width="2.1"/><path d="M714.8 431.3l-2.9 4.4" stroke="#686868" stroke-width="2.3" stroke-linecap="round"/><circle cx="722.5" cy="432.6" r="4.9" fill="#d0142c" stroke="#f6f7fa" stroke-width=".7"/><path d="M720.8 430.90000000000003L724.2 434.3M724.2 430.90000000000003L720.8 434.3" stroke="#fff" stroke-width="1.5" stroke-linecap="round" fill="none"/>
<path d="M737.0999999999999 424.0l9.4 9.4M746.5 424.0l-9.4 9.4" stroke="#686868" stroke-width="2.4"/><rect x="740.6999999999999" y="427.59999999999997" width="2.2" height="2.2" fill="#dff0f5"/><path d="M734.0999999999999 421.09999999999997h5.9l-5.9 5.9z" fill="#0f9ae0" stroke="#0f9ae0" stroke-width=".6" stroke-linejoin="round"/><path d="M734.0999999999999 436.3h5.9l-5.9 -5.9z" fill="#0f9ae0" stroke="#0f9ae0" stroke-width=".6" stroke-linejoin="round"/><path d="M749.5 421.09999999999997h-5.9l5.9 5.9z" fill="#0f9ae0" stroke="#0f9ae0" stroke-width=".6" stroke-linejoin="round"/><path d="M749.5 436.3h-5.9l5.9 -5.9z" fill="#0f9ae0" stroke="#0f9ae0" stroke-width=".6" stroke-linejoin="round"/>
<rect x="868" y="421" width="14.5" height="13" rx="1.6" fill="#6b6b6b"/><circle cx="872.3" cy="424.9" r="2" fill="#d7e9f1"/><path d="M869.5 432.5l3.6-4.2 2.4 2.3 1-1 3 2.9z" fill="#d7e9f1"/>
<path d="M877 430v-1.8a2.6 2.6 0 0 1 5.2 0V430" fill="none" stroke="#1b9ae0" stroke-width="1.5"/><rect x="875" y="429.8" width="9.2" height="7" rx=".6" fill="#1b9ae0" stroke="#d7e9f1" stroke-width=".5"/>
<rect x="891.2" y="421" width="14.6" height="13" rx="2" fill="#6b6b6b"/><rect x="897" y="428.2" width="10" height="8.6" rx=".6" fill="#1b9ae0" stroke="#fff" stroke-width=".6"/><path d="M898.2 435.6l2.6-3 1.5 1.5 1.4-1.6 2.4 3.1z" fill="#fff"/><path d="M900 429.7v3M898.5 431.2h3" stroke="#fff" stroke-width=".9"/>
<path d="M913 427.2h5.6l-2.8 3z" fill="#111"/>
</svg>
<svg style="left:0;top:438px" width="941" height="196" viewBox="0 438 941 196" font-family="Liberation Sans, sans-serif">
<rect x="238" y="442" width="282.5" height="186.5" fill="#dcdfe5"/>
<rect x="241" y="442" width="275.5" height="185" fill="#fff"/>
<rect x="238" y="455" width="2.5" height="1" fill="#777"/>
<rect x="238" y="484" width="2.5" height="1" fill="#777"/>
<rect x="238" y="500" width="2.5" height="1" fill="#777"/>
<rect x="238" y="516" width="2.5" height="1" fill="#777"/>
<rect x="238" y="545" width="2.5" height="1" fill="#777"/>
<rect x="238" y="566" width="2.5" height="1" fill="#777"/>
<rect x="238" y="583" width="2.5" height="1" fill="#777"/>
<rect x="517.5" y="449" width="2.5" height="1" fill="#888"/>
<rect x="517.5" y="474" width="2.5" height="1" fill="#888"/>
<rect x="517.5" y="484" width="2.5" height="1" fill="#888"/>
<rect x="517.5" y="497" width="2.5" height="1" fill="#888"/>
<rect x="517.5" y="509" width="2.5" height="1" fill="#888"/>
<rect x="517.5" y="547" width="2.5" height="1" fill="#888"/>
<rect x="517.5" y="575" width="2.5" height="1" fill="#888"/>
<rect x="517.5" y="587" width="2.5" height="1" fill="#888"/>
<rect x="517.5" y="601" width="2.5" height="1" fill="#888"/>
<rect x="246" y="446.5" width="3" height="2.7" fill="#d33"/><rect x="249" y="446.5" width="3" height="2.7" fill="#36c"/><rect x="246" y="449.2" width="3" height="2.8" fill="#eb3"/><rect x="249" y="449.2" width="3" height="2.8" fill="#36c"/>
<text x="255" y="452" font-size="6.3" fill="#2a2a2a" textLength="196" lengthAdjust="spacingAndGlyphs">Orders - C:\Users\Public\Documents\TestComplete 14 Samples\Desktop\Orde...</text>
<path d="M461 449.5h5.5 M482.5 446.3h5v5.7h-5z M503 446.3l5.2 5.6 M508.2 446.3l-5.2 5.6" stroke="#333" stroke-width=".8" fill="none"/>
<text transform="translate(245.0,463.6) scale(0.82,1)" font-size="6.3" fill="#2a2a2a">File</text>
<text transform="translate(260.0,463.6) scale(0.82,1)" font-size="6.3" fill="#2a2a2a">Orders</text>
<text transform="translate(283.0,463.6) scale(0.82,1)" font-size="6.3" fill="#2a2a2a">Report</text>
<text transform="translate(305.0,463.6) scale(0.82,1)" font-size="6.3" fill="#2a2a2a">View</text>
<rect x="241.6" y="466" width="274.6" height="12.5" fill="#f0f0f0" stroke="#ee1c24" stroke-width="1.3"/>
<path d="M245.5 468.5h3l1.8 1.8v5.7h-4.8z" fill="#fff" stroke="#222" stroke-width=".8"/>
<path d="M254 475.5v-5h3l.8-1.2h3v1.5h1.2l-1.5 4.7z" fill="#8a7a1a"/><path d="M255.5 475.5l1.6-3.6h5.3l-1.6 3.6z" fill="#d8c860"/>
<rect x="266" y="468.5" width="7" height="7" fill="#111"/><rect x="267.5" y="469.2" width="4" height="2.4" fill="#ddd"/>
<rect x="278" y="468.5" width="4" height="5" fill="#889" stroke="#334" stroke-width=".6"/><rect x="281" y="470.5" width="4" height="5" fill="#9ac" stroke="#334" stroke-width=".6"/>
<circle cx="293.3" cy="473.2" r="7.8" fill="#fdf3c0" stroke="#6a0a0a" stroke-width="1.2"/><circle cx="293.3" cy="473.2" r="6.5" fill="none" stroke="#f7c400" stroke-width="1.4"/>
<rect x="290" y="469.5" width="6" height="6.5" fill="#b8283a"/><rect x="291.3" y="468.6" width="3.4" height="1.8" fill="#445"/><path d="M293.5 473l0 5 1.2-1.2 1 2 .8-.4-1-2h1.7z" fill="#fff" stroke="#777" stroke-width=".4"/>
<path d="M303 469l6 6.5 M309 469l-6 6.5" stroke="#111" stroke-width="1.1"/>
<g fill="#2b4fc0"><rect x="315" y="469.5" width="2.4" height="2.4"/><rect x="318" y="472.5" width="2.6" height="2.6"/><rect x="326" y="469.5" width="1.5" height="1.5"/><rect x="328.5" y="469.5" width="3.5" height="1"/><rect x="328" y="472.3" width="1.5" height="1.5"/><rect x="330" y="472.6" width="2.5" height="1"/><rect x="328" y="475" width="1.5" height="1.2"/><rect x="336.5" y="469.3" width="1.6" height="1.6"/><rect x="338.6" y="469.6" width="1.6" height="1"/><rect x="340.8" y="469.3" width="1.6" height="1.6"/><rect x="336.5" y="472"  width="1.6" height="1.6"/><rect x="338.6" y="472.3" width="1.6" height="1"/><rect x="340.8" y="472" width="1.6" height="1.6"/><rect x="336.5" y="474.7" width="1.6" height="1.6"/><rect x="338.6" y="475" width="1.6" height="1"/><rect x="340.8" y="474.7" width="1.6" height="1.6"/></g>
<rect x="346" y="467.3" width="11" height="10" fill="#b5cdf0"/><g fill="#223"><rect x="348.3" y="469" width="1.2" height="6.8"/><rect x="350.3" y="469" width="1.2" height="6.8"/><rect x="352.3" y="469" width="1.2" height="6.8"/><rect x="354.3" y="469" width="1.2" height="6.8"/></g>
<text transform="translate(245.0,487.0) scale(0.78,1)" font-size="6.2" fill="#2a2a2a">Customer Name</text>
<text transform="translate(301.0,487.0) scale(0.78,1)" font-size="6.2" fill="#2a2a2a">Product</text>
<text transform="translate(347.6,487.0) scale(0.78,1)" font-size="6.2" fill="#2a2a2a">Quantity</text>
<text transform="translate(374.0,487.0) scale(0.78,1)" font-size="6.2" fill="#2a2a2a">Date</text>
<text transform="translate(423.0,487.0) scale(0.78,1)" font-size="6.2" fill="#2a2a2a">Street</text>
<text transform="translate(478.0,487.0) scale(0.78,1)" font-size="6.2" fill="#2a2a2a">City</text>
<rect x="299" y="481" width=".7" height="9" fill="#e2e2e2"/>
<rect x="345.5" y="481" width=".7" height="9" fill="#e2e2e2"/>
<rect x="371.5" y="481" width=".7" height="9" fill="#e2e2e2"/>
<rect x="420" y="481" width=".7" height="9" fill="#e2e2e2"/>
<rect x="475.5" y="481" width=".7" height="9" fill="#e2e2e2"/>
<rect x="244.5" y="514.6" width="271" height="7.4" fill="#0a64d0"/>
<text transform="translate(245.5,497.0) scale(0.79,1)" font-size="6.2" fill="#2a2a2a">John Smith Jr</text>
<text transform="translate(301.5,497.0) scale(0.79,1)" font-size="6.2" fill="#2a2a2a">MyMoney</text>
<text transform="translate(349.0,497.0) scale(0.79,1)" font-size="6.2" fill="#2a2a2a">1</text>
<text transform="translate(374.5,497.0) scale(0.79,1)" font-size="6.2" fill="#2a2a2a">7/5/09</text>
<text transform="translate(423.5,497.0) scale(0.79,1)" font-size="6.2" fill="#2a2a2a">12, Orange Blvd</text>
<text transform="translate(478.5,497.0) scale(0.79,1)" font-size="6.2" fill="#2a2a2a">Grovetown, CA</text>
<text transform="translate(245.5,505.0) scale(0.79,1)" font-size="6.2" fill="#2a2a2a">Clare Jefferson</text>
<text transform="translate(301.5,505.0) scale(0.79,1)" font-size="6.2" fill="#2a2a2a">FamilyAlbum</text>
<text transform="translate(349.0,505.0) scale(0.79,1)" font-size="6.2" fill="#2a2a2a">2</text>
<text transform="translate(374.5,505.0) scale(0.79,1)" font-size="6.2" fill="#2a2a2a">5/4/09</text>
<text transform="translate(423.5,505.0) scale(0.79,1)" font-size="6.2" fill="#2a2a2a">23, Owk Street</text>
<text transform="translate(478.5,505.0) scale(0.79,1)" font-size="6.2" fill="#2a2a2a">Greentown, CA</text>
<text transform="translate(245.5,513.0) scale(0.79,1)" font-size="6.2" fill="#2a2a2a">Susan McLaren</text>
<text transform="translate(301.5,513.0) scale(0.79,1)" font-size="6.2" fill="#2a2a2a">MyMoney</text>
<text transform="translate(349.0,513.0) scale(0.79,1)" font-size="6.2" fill="#2a2a2a">1</text>
<text transform="translate(374.5,513.0) scale(0.79,1)" font-size="6.2" fill="#2a2a2a">12/5/08</text>
<text transform="translate(423.5,513.0) scale(0.79,1)" font-size="6.2" fill="#2a2a2a">7, Flower Street</text>
<text transform="translate(478.5,513.0) scale(0.79,1)" font-size="6.2" fill="#2a2a2a">Earlcastle</text>
<text transform="translate(245.5,520.2) scale(0.79,1)" font-size="6.2" fill="#fff">Charles Dodgeson</text>
<text transform="translate(301.5,520.2) scale(0.79,1)" font-size="6.2" fill="#fff">MyMoney</text>
<text transform="translate(349.0,520.2) scale(0.79,1)" font-size="6.2" fill="#fff">1</text>
<text transform="translate(374.5,520.2) scale(0.79,1)" font-size="6.2" fill="#fff">12/5/09</text>
<text transform="translate(423.5,520.2) scale(0.79,1)" font-size="6.2" fill="#fff">45, Stone st.</text>
<text transform="translate(478.5,520.2) scale(0.79,1)" font-size="6.2" fill="#fff">Bringtone, TX</text>
<text transform="translate(245.5,528.2) scale(0.79,1)" font-size="6.2" fill="#2a2a2a">Steve Johns</text>
<text transform="translate(301.5,528.2) scale(0.79,1)" font-size="6.2" fill="#2a2a2a">ScreenSaver</text>
<text transform="translate(349.0,528.2) scale(0.79,1)" font-size="6.2" fill="#2a2a2a">1</text>
<text transform="translate(374.5,528.2) scale(0.79,1)" font-size="6.2" fill="#2a2a2a">4/4/08</text>
<text transform="translate(423.5,528.2) scale(0.79,1)" font-size="6.2" fill="#2a2a2a">17, Park Avenue</text>
<text transform="translate(478.5,528.2) scale(0.79,1)" font-size="6.2" fill="#2a2a2a">Salmon Island</text>
<text transform="translate(245.5,536.2) scale(0.79,1)" font-size="6.2" fill="#2a2a2a">Samuel Clemens</text>
<text transform="translate(301.5,536.2) scale(0.79,1)" font-size="6.2" fill="#2a2a2a">MyMoney</text>
<text transform="translate(349.0,536.2) scale(0.79,1)" font-size="6.2" fill="#2a2a2a">2</text>
<text transform="translate(374.5,536.2) scale(0.79,1)" font-size="6.2" fill="#2a2a2a">12/12/09</text>
<text transform="translate(423.5,536.2) scale(0.79,1)" font-size="6.2" fill="#2a2a2a">3, Garden st.</text>
<text transform="translate(478.5,536.2) scale(0.79,1)" font-size="6.2" fill="#2a2a2a">Hillsberry, UT</text>
<text transform="translate(245.5,544.0) scale(0.79,1)" font-size="6.2" fill="#2a2a2a">Bob Feather</text>
<text transform="translate(301.5,544.0) scale(0.79,1)" font-size="6.2" fill="#2a2a2a">FamilyAlbum</text>
<text transform="translate(349.0,544.0) scale(0.79,1)" font-size="6.2" fill="#2a2a2a">1</text>
<text transform="translate(374.5,544.0) scale(0.79,1)" font-size="6.2" fill="#2a2a2a">3/12/10</text>
<text transform="translate(423.5,544.0) scale(0.79,1)" font-size="6.2" fill="#2a2a2a">14, North av.</text>
<text transform="translate(478.5,544.0) scale(0.79,1)" font-size="6.2" fill="#2a2a2a">Milltown, WI</text>
<text transform="translate(245.5,552.0) scale(0.79,1)" font-size="6.2" fill="#2a2a2a">Mark Smith</text>
<text transform="translate(301.5,552.0) scale(0.79,1)" font-size="6.2" fill="#2a2a2a">FamilyAlbum</text>
<text transform="translate(349.0,552.0) scale(0.79,1)" font-size="6.2" fill="#2a2a2a">1</text>
<text transform="translate(374.5,552.0) scale(0.79,1)" font-size="6.2" fill="#2a2a2a">2/2/10</text>
<text transform="translate(423.5,552.0) scale(0.79,1)" font-size="6.2" fill="#2a2a2a">9, Maple Valley</text>
<text transform="translate(478.5,552.0) scale(0.79,1)" font-size="6.2" fill="#2a2a2a">Whitestone, Britis</text>
<rect x="516.5" y="545" width="4" height="8" fill="#dcdfe5"/>
<rect x="241" y="608.5" width="275.5" height="7.5" fill="#f0f0f0"/><rect x="251" y="608.5" width="134" height="7.5" fill="#cdcdcd"/>
<path d="M247.3 610.3l-2 2 2 2 M509.5 610.3l2 2-2 2" stroke="#444" stroke-width=".8" fill="none"/>
<rect x="241" y="617.5" width="275.5" height="9" fill="#f0f0f0"/><rect x="241" y="617" width="275.5" height=".7" fill="#d0d0d0"/><rect x="241" y="626.5" width="275.5" height="1" fill="#c4c4c4"/>
<path d="M514.8 622.5l-2.5 2.5 M514.8 624.3l-1 1" stroke="#aaa" stroke-width=".6"/>
<rect x="611" y="442" width="282.5" height="186.5" fill="#dcdfe5"/>
<rect x="614" y="442" width="275.5" height="185" fill="#fff"/>
<rect x="611" y="455" width="2.5" height="1" fill="#777"/>
<rect x="611" y="484" width="2.5" height="1" fill="#777"/>
<rect x="611" y="500" width="2.5" height="1" fill="#777"/>
<rect x="611" y="516" width="2.5" height="1" fill="#777"/>
<rect x="611" y="545" width="2.5" height="1" fill="#777"/>
<rect x="611" y="566" width="2.5" height="1" fill="#777"/>
<rect x="611" y="583" width="2.5" height="1" fill="#777"/>
<rect x="890.5" y="449" width="2.5" height="1" fill="#888"/>
<rect x="890.5" y="474" width="2.5" height="1" fill="#888"/>
<rect x="890.5" y="484" width="2.5" height="1" fill="#888"/>
<rect x="890.5" y="497" width="2.5" height="1" fill="#888"/>
<rect x="890.5" y="509" width="2.5" height="1" fill="#888"/>
<rect x="890.5" y="547" width="2.5" height="1" fill="#888"/>
<rect x="890.5" y="575" width="2.5" height="1" fill="#888"/>
<rect x="890.5" y="587" width="2.5" height="1" fill="#888"/>
<rect x="890.5" y="601" width="2.5" height="1" fill="#888"/>
<rect x="619" y="446.5" width="3" height="2.7" fill="#d33"/><rect x="622" y="446.5" width="3" height="2.7" fill="#36c"/><rect x="619" y="449.2" width="3" height="2.8" fill="#eb3"/><rect x="622" y="449.2" width="3" height="2.8" fill="#36c"/>
<text x="628" y="452" font-size="6.3" fill="#2a2a2a" textLength="196" lengthAdjust="spacingAndGlyphs">Orders - C:\Users\Public\Documents\TestComplete 14 Samples\Desktop\Orde...</text>
<path d="M834 449.5h5.5 M855.5 446.3h5v5.7h-5z M876 446.3l5.2 5.6 M881.2 446.3l-5.2 5.6" stroke="#333" stroke-width=".8" fill="none"/>
<text transform="translate(618.0,463.6) scale(0.82,1)" font-size="6.3" fill="#2a2a2a">File</text>
<text transform="translate(633.0,463.6) scale(0.82,1)" font-size="6.3" fill="#2a2a2a">Orders</text>
<text transform="translate(656.0,463.6) scale(0.82,1)" font-size="6.3" fill="#2a2a2a">Report</text>
<text transform="translate(678.0,463.6) scale(0.82,1)" font-size="6.3" fill="#2a2a2a">View</text>
<rect x="614.6" y="466" width="274.6" height="12.5" fill="#f0f0f0" stroke="#ee1c24" stroke-width="1.3"/>
<path d="M618.5 468.5h3l1.8 1.8v5.7h-4.8z" fill="#fff" stroke="#222" stroke-width=".8"/>
<path d="M627 475.5v-5h3l.8-1.2h3v1.5h1.2l-1.5 4.7z" fill="#8a7a1a"/><path d="M628.5 475.5l1.6-3.6h5.3l-1.6 3.6z" fill="#d8c860"/>
<rect x="639" y="468.5" width="7" height="7" fill="#111"/><rect x="640.5" y="469.2" width="4" height="2.4" fill="#ddd"/>
<rect x="651" y="468.5" width="4" height="5" fill="#889" stroke="#334" stroke-width=".6"/><rect x="654" y="470.5" width="4" height="5" fill="#9ac" stroke="#334" stroke-width=".6"/>
<circle cx="666.3" cy="473.2" r="7.8" fill="#fdf3c0" stroke="#6a0a0a" stroke-width="1.2"/><circle cx="666.3" cy="473.2" r="6.5" fill="none" stroke="#f7c400" stroke-width="1.4"/>
<rect x="663" y="469.5" width="6" height="6.5" fill="#b8283a"/><rect x="664.3" y="468.6" width="3.4" height="1.8" fill="#445"/><path d="M666.5 473l0 5 1.2-1.2 1 2 .8-.4-1-2h1.7z" fill="#fff" stroke="#777" stroke-width=".4"/>
<path d="M676 469l6 6.5 M682 469l-6 6.5" stroke="#111" stroke-width="1.1"/>
<g fill="#2b4fc0"><rect x="688" y="469.5" width="2.4" height="2.4"/><rect x="691" y="472.5" width="2.6" height="2.6"/><rect x="699" y="469.5" width="1.5" height="1.5"/><rect x="701.5" y="469.5" width="3.5" height="1"/><rect x="701" y="472.3" width="1.5" height="1.5"/><rect x="703" y="472.6" width="2.5" height="1"/><rect x="701" y="475" width="1.5" height="1.2"/><rect x="709.5" y="469.3" width="1.6" height="1.6"/><rect x="711.6" y="469.6" width="1.6" height="1"/><rect x="713.8" y="469.3" width="1.6" height="1.6"/><rect x="709.5" y="472"  width="1.6" height="1.6"/><rect x="711.6" y="472.3" width="1.6" height="1"/><rect x="713.8" y="472" width="1.6" height="1.6"/><rect x="709.5" y="474.7" width="1.6" height="1.6"/><rect x="711.6" y="475" width="1.6" height="1"/><rect x="713.8" y="474.7" width="1.6" height="1.6"/></g>
<rect x="719" y="467.3" width="11" height="10" fill="#b5cdf0"/><g fill="#223"><rect x="721.3" y="469" width="1.2" height="6.8"/><rect x="723.3" y="469" width="1.2" height="6.8"/><rect x="725.3" y="469" width="1.2" height="6.8"/><rect x="727.3" y="469" width="1.2" height="6.8"/></g>
<text transform="translate(618.0,487.0) scale(0.78,1)" font-size="6.2" fill="#2a2a2a">Customer Name</text>
<text transform="translate(674.0,487.0) scale(0.78,1)" font-size="6.2" fill="#2a2a2a">Product</text>
<text transform="translate(720.6,487.0) scale(0.78,1)" font-size="6.2" fill="#2a2a2a">Quantity</text>
<text transform="translate(747.0,487.0) scale(0.78,1)" font-size="6.2" fill="#2a2a2a">Date</text>
<text transform="translate(796.0,487.0) scale(0.78,1)" font-size="6.2" fill="#2a2a2a">Street</text>
<text transform="translate(851.0,487.0) scale(0.78,1)" font-size="6.2" fill="#2a2a2a">City</text>
<rect x="672" y="481" width=".7" height="9" fill="#e2e2e2"/>
<rect x="718.5" y="481" width=".7" height="9" fill="#e2e2e2"/>
<rect x="744.5" y="481" width=".7" height="9" fill="#e2e2e2"/>
<rect x="793" y="481" width=".7" height="9" fill="#e2e2e2"/>
<rect x="848.5" y="481" width=".7" height="9" fill="#e2e2e2"/>
<rect x="617.5" y="514.6" width="271" height="7.4" fill="#0a64d0"/>
<text transform="translate(618.5,497.0) scale(0.79,1)" font-size="6.2" fill="#2a2a2a">John Smith Jr</text>
<text transform="translate(674.5,497.0) scale(0.79,1)" font-size="6.2" fill="#2a2a2a">MyMoney</text>
<text transform="translate(722.0,497.0) scale(0.79,1)" font-size="6.2" fill="#2a2a2a">1</text>
<text transform="translate(747.5,497.0) scale(0.79,1)" font-size="6.2" fill="#2a2a2a">7/5/09</text>
<text transform="translate(796.5,497.0) scale(0.79,1)" font-size="6.2" fill="#2a2a2a">12, Orange Blvd</text>
<text transform="translate(851.5,497.0) scale(0.79,1)" font-size="6.2" fill="#2a2a2a">Grovetown, CA</text>
<text transform="translate(618.5,505.0) scale(0.79,1)" font-size="6.2" fill="#2a2a2a">Clare Jefferson</text>
<text transform="translate(674.5,505.0) scale(0.79,1)" font-size="6.2" fill="#2a2a2a">FamilyAlbum</text>
<text transform="translate(722.0,505.0) scale(0.79,1)" font-size="6.2" fill="#2a2a2a">2</text>
<text transform="translate(747.5,505.0) scale(0.79,1)" font-size="6.2" fill="#2a2a2a">5/4/09</text>
<text transform="translate(796.5,505.0) scale(0.79,1)" font-size="6.2" fill="#2a2a2a">23, Owk Street</text>
<text transform="translate(851.5,505.0) scale(0.79,1)" font-size="6.2" fill="#2a2a2a">Greentown, CA</text>
<text transform="translate(618.5,513.0) scale(0.79,1)" font-size="6.2" fill="#2a2a2a">Susan McLaren</text>
<text transform="translate(674.5,513.0) scale(0.79,1)" font-size="6.2" fill="#2a2a2a">MyMoney</text>
<text transform="translate(722.0,513.0) scale(0.79,1)" font-size="6.2" fill="#2a2a2a">1</text>
<text transform="translate(747.5,513.0) scale(0.79,1)" font-size="6.2" fill="#2a2a2a">12/5/08</text>
<text transform="translate(796.5,513.0) scale(0.79,1)" font-size="6.2" fill="#2a2a2a">7, Flower Street</text>
<text transform="translate(851.5,513.0) scale(0.79,1)" font-size="6.2" fill="#2a2a2a">Earlcastle</text>
<text transform="translate(618.5,520.2) scale(0.79,1)" font-size="6.2" fill="#fff">Charles Dodgeson</text>
<text transform="translate(674.5,520.2) scale(0.79,1)" font-size="6.2" fill="#fff">MyMoney</text>
<text transform="translate(722.0,520.2) scale(0.79,1)" font-size="6.2" fill="#fff">1</text>
<text transform="translate(747.5,520.2) scale(0.79,1)" font-size="6.2" fill="#fff">12/5/09</text>
<text transform="translate(796.5,520.2) scale(0.79,1)" font-size="6.2" fill="#fff">45, Stone st.</text>
<text transform="translate(851.5,520.2) scale(0.79,1)" font-size="6.2" fill="#fff">Bringtone, TX</text>
<text transform="translate(618.5,528.2) scale(0.79,1)" font-size="6.2" fill="#2a2a2a">Steve Johns</text>
<text transform="translate(674.5,528.2) scale(0.79,1)" font-size="6.2" fill="#2a2a2a">ScreenSaver</text>
<text transform="translate(722.0,528.2) scale(0.79,1)" font-size="6.2" fill="#2a2a2a">1</text>
<text transform="translate(747.5,528.2) scale(0.79,1)" font-size="6.2" fill="#2a2a2a">4/4/08</text>
<text transform="translate(796.5,528.2) scale(0.79,1)" font-size="6.2" fill="#2a2a2a">17, Park Avenue</text>
<text transform="translate(851.5,528.2) scale(0.79,1)" font-size="6.2" fill="#2a2a2a">Salmon Island</text>
<text transform="translate(618.5,536.2) scale(0.79,1)" font-size="6.2" fill="#2a2a2a">Samuel Clemens</text>
<text transform="translate(674.5,536.2) scale(0.79,1)" font-size="6.2" fill="#2a2a2a">MyMoney</text>
<text transform="translate(722.0,536.2) scale(0.79,1)" font-size="6.2" fill="#2a2a2a">2</text>
<text transform="translate(747.5,536.2) scale(0.79,1)" font-size="6.2" fill="#2a2a2a">12/12/09</text>
<text transform="translate(796.5,536.2) scale(0.79,1)" font-size="6.2" fill="#2a2a2a">3, Garden st.</text>
<text transform="translate(851.5,536.2) scale(0.79,1)" font-size="6.2" fill="#2a2a2a">Hillsberry, UT</text>
<text transform="translate(618.5,544.0) scale(0.79,1)" font-size="6.2" fill="#2a2a2a">Bob Feather</text>
<text transform="translate(674.5,544.0) scale(0.79,1)" font-size="6.2" fill="#2a2a2a">FamilyAlbum</text>
<text transform="translate(722.0,544.0) scale(0.79,1)" font-size="6.2" fill="#2a2a2a">1</text>
<text transform="translate(747.5,544.0) scale(0.79,1)" font-size="6.2" fill="#2a2a2a">3/12/10</text>
<text transform="translate(796.5,544.0) scale(0.79,1)" font-size="6.2" fill="#2a2a2a">14, North av.</text>
<text transform="translate(851.5,544.0) scale(0.79,1)" font-size="6.2" fill="#2a2a2a">Milltown, WI</text>
<text transform="translate(618.5,552.0) scale(0.79,1)" font-size="6.2" fill="#2a2a2a">Mark Smith</text>
<text transform="translate(674.5,552.0) scale(0.79,1)" font-size="6.2" fill="#2a2a2a">FamilyAlbum</text>
<text transform="translate(722.0,552.0) scale(0.79,1)" font-size="6.2" fill="#2a2a2a">1</text>
<text transform="translate(747.5,552.0) scale(0.79,1)" font-size="6.2" fill="#2a2a2a">2/2/10</text>
<text transform="translate(796.5,552.0) scale(0.79,1)" font-size="6.2" fill="#2a2a2a">9, Maple Valley</text>
<text transform="translate(851.5,552.0) scale(0.79,1)" font-size="6.2" fill="#2a2a2a">Whitestone, Britis</text>
<rect x="889.5" y="545" width="4" height="8" fill="#dcdfe5"/>
<rect x="614" y="608.5" width="275.5" height="7.5" fill="#f0f0f0"/><rect x="624" y="608.5" width="134" height="7.5" fill="#cdcdcd"/>
<path d="M620.3 610.3l-2 2 2 2 M882.5 610.3l2 2-2 2" stroke="#444" stroke-width=".8" fill="none"/>
<rect x="614" y="617.5" width="275.5" height="9" fill="#f0f0f0"/><rect x="614" y="617" width="275.5" height=".7" fill="#d0d0d0"/><rect x="614" y="626.5" width="275.5" height="1" fill="#c4c4c4"/>
<path d="M887.8 622.5l-2.5 2.5 M887.8 624.3l-1 1" stroke="#aaa" stroke-width=".6"/>
</svg>
</body></html>
